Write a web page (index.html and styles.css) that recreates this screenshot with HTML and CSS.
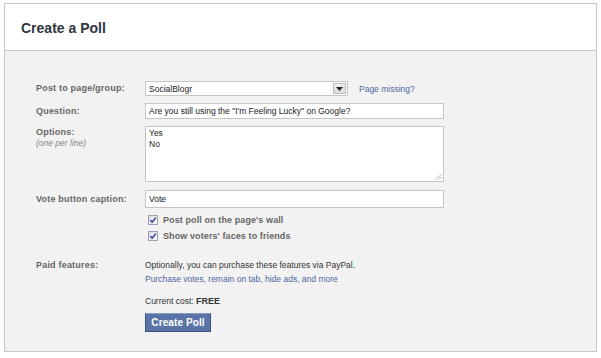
FILE: index.html
```html
<!DOCTYPE html>
<html>
<head>
<meta charset="utf-8">
<link rel="stylesheet" href="styles.css">
</head>
<body>
<div class="box">
  <div class="header"><h1 class="title">Create a Poll</h1></div>
  <div class="body">
    <div class="row row-select">
      <div class="label">Post to page/group:</div>
      <div class="field">
        <div class="select"><span class="select-text">SocialBlogr</span><span class="select-btn"><svg width="7" height="4" viewBox="0 0 7 4"><path d="M0 0h7L3.5 4z" fill="#222"/></svg></span></div>
        <a class="link missing">Page missing?</a>
      </div>
    </div>
    <div class="row row-question">
      <div class="label">Question:</div>
      <div class="field"><div class="input wide">Are you still using the "I'm Feeling Lucky" on Google?</div></div>
    </div>
    <div class="row row-options">
      <div class="label">Options:<div class="hint">(one per line)</div></div>
      <div class="field">
        <div class="textarea">Yes<br>No
          <svg class="grip" width="7" height="7" viewBox="0 0 7 7"><path d="M6.5 1L1 6.5M6.5 4L4 6.5" stroke="#999" stroke-width="0.8"/></svg>
        </div>
      </div>
    </div>
    <div class="row row-vote">
      <div class="label">Vote button caption:</div>
      <div class="field"><div class="input wide tall">Vote</div></div>
    </div>
    <div class="row row-check1">
      <div class="label"></div>
      <div class="field check"><span class="cb"><svg width="8" height="8" viewBox="0 0 8 8"><path d="M1.3 4.2L3.2 6.2L6.8 1.6" fill="none" stroke="#2b3f8c" stroke-width="1.5"/></svg></span><span class="cb-text">Post poll on the page's wall</span></div>
    </div>
    <div class="row row-check2">
      <div class="label"></div>
      <div class="field check"><span class="cb"><svg width="8" height="8" viewBox="0 0 8 8"><path d="M1.3 4.2L3.2 6.2L6.8 1.6" fill="none" stroke="#2b3f8c" stroke-width="1.5"/></svg></span><span class="cb-text">Show voters' faces to friends</span></div>
    </div>
    <div class="row row-paid">
      <div class="label">Paid features:</div>
      <div class="field col">
        <div class="text">Optionally, you can purchase these features via PayPal.</div>
        <a class="link buy">Purchase votes, remain on tab, hide ads, and more</a>
        <div class="text cost">Current cost: <b>FREE</b></div>
        <button class="btn">Create Poll</button>
      </div>
    </div>
  </div>
</div>
</body>
</html>
```
FILE: styles.css
```css
html, body { margin: 0; padding: 0; background: #fff; }
body { font-family: "Liberation Sans", Arial, sans-serif; color: #333; }
.box {
  margin: 3px 0 0 4px;
  width: 591px;
  border: 1px solid #c6c6c6;
}
.header {
  height: 46px;
  background: #fff;
  border-bottom: 1px solid #c6c6c6;
  display: flex;
  align-items: center;
  padding-left: 16px;
}
.title {
  margin: 0;
  font-size: 14px;
  font-weight: bold;
  color: #2f3640;
  position: relative;
  top: 1px;
}
.body {
  background: #f2f2f2;
  height: 270px;
  padding: 30px 0 0 31px;
}
.row { display: flex; }
.label {
  width: 109px;
  flex: none;
  font-size: 9px;
  font-weight: bold;
  letter-spacing: 0.2px;
  color: #666;
  line-height: 12px;
}
.hint {
  font-weight: normal;
  font-style: italic;
  color: #888;
  letter-spacing: 0;
  font-size: 8.5px;
  line-height: 11px;
}
.field { display: flex; align-items: center; font-size: 8.5px; }
.col { flex-direction: column; align-items: flex-start; }
.select {
  box-sizing: border-box;
  width: 203px;
  height: 15px;
  background: #fff;
  border: 1px solid #c5c5c5;
  display: flex;
  align-items: center;
  justify-content: space-between;
  padding: 0 1px 0 3px;
  color: #222;
}
.select-btn {
  width: 13px;
  height: 11px;
  box-sizing: border-box;
  border: 1px solid #bbb;
  background: linear-gradient(#f0f0f0, #dadada);
  display: flex;
  align-items: center;
  justify-content: center;
}
.link { color: #4f67a0; cursor: pointer; }
.missing { margin-left: 11px; }
.row-select .label { line-height: 15px; }
.row-question { margin-top: 7px; }
.row-question .label { line-height: 16px; }
.input {
  box-sizing: border-box;
  height: 16px;
  background: #fff;
  border: 1px solid #c5c5c5;
  padding: 0 3px;
  line-height: 14px;
  color: #222;
}
.wide { width: 299px; }
.tall { height: 18px; line-height: 16px; }
.row-options { margin-top: 7px; }
.textarea {
  position: relative;
  box-sizing: border-box;
  width: 299px;
  height: 56px;
  background: #fff;
  border: 1px solid #c5c5c5;
  padding: 1px 3px;
  line-height: 11px;
  color: #222;
}
.grip { position: absolute; right: 1px; bottom: 1px; }
.row-options .field { align-items: flex-start; }
.row-vote { margin-top: 8px; }
.row-vote .label { line-height: 18px; }
.row-check1 { margin-top: 6px; }
.row-check2 { margin-top: 4px; }
.check { height: 12px; padding-left: 3px; }
.cb {
  box-sizing: border-box;
  width: 10px;
  height: 10px;
  border: 1px solid #9aa3b5;
  background: linear-gradient(135deg, #dedede, #f8f8f8);
  display: flex;
  align-items: center;
  justify-content: center;
}
.cb-text {
  margin-left: 5px;
  font-size: 9px;
  font-weight: bold;
  letter-spacing: 0.1px;
  color: #666;
}
.row-paid { margin-top: 17px; }
.text { line-height: 12px; color: #333; }
.buy { line-height: 12px; margin-top: 2px; }
.cost { margin-top: 10px; }
.cost b { font-size: 9px; color: #333; }
.btn {
  margin-top: 6px;
  box-sizing: border-box;
  width: 66px;
  height: 19px;
  padding: 0;
  background: #5b74a8;
  border: 1px solid #3d5388;
  border-top-color: #8a9cc2;
  color: #fff;
  font-family: "Liberation Sans", Arial, sans-serif;
  font-size: 10px;
  font-weight: bold;
  letter-spacing: 0.1px;
}
```
